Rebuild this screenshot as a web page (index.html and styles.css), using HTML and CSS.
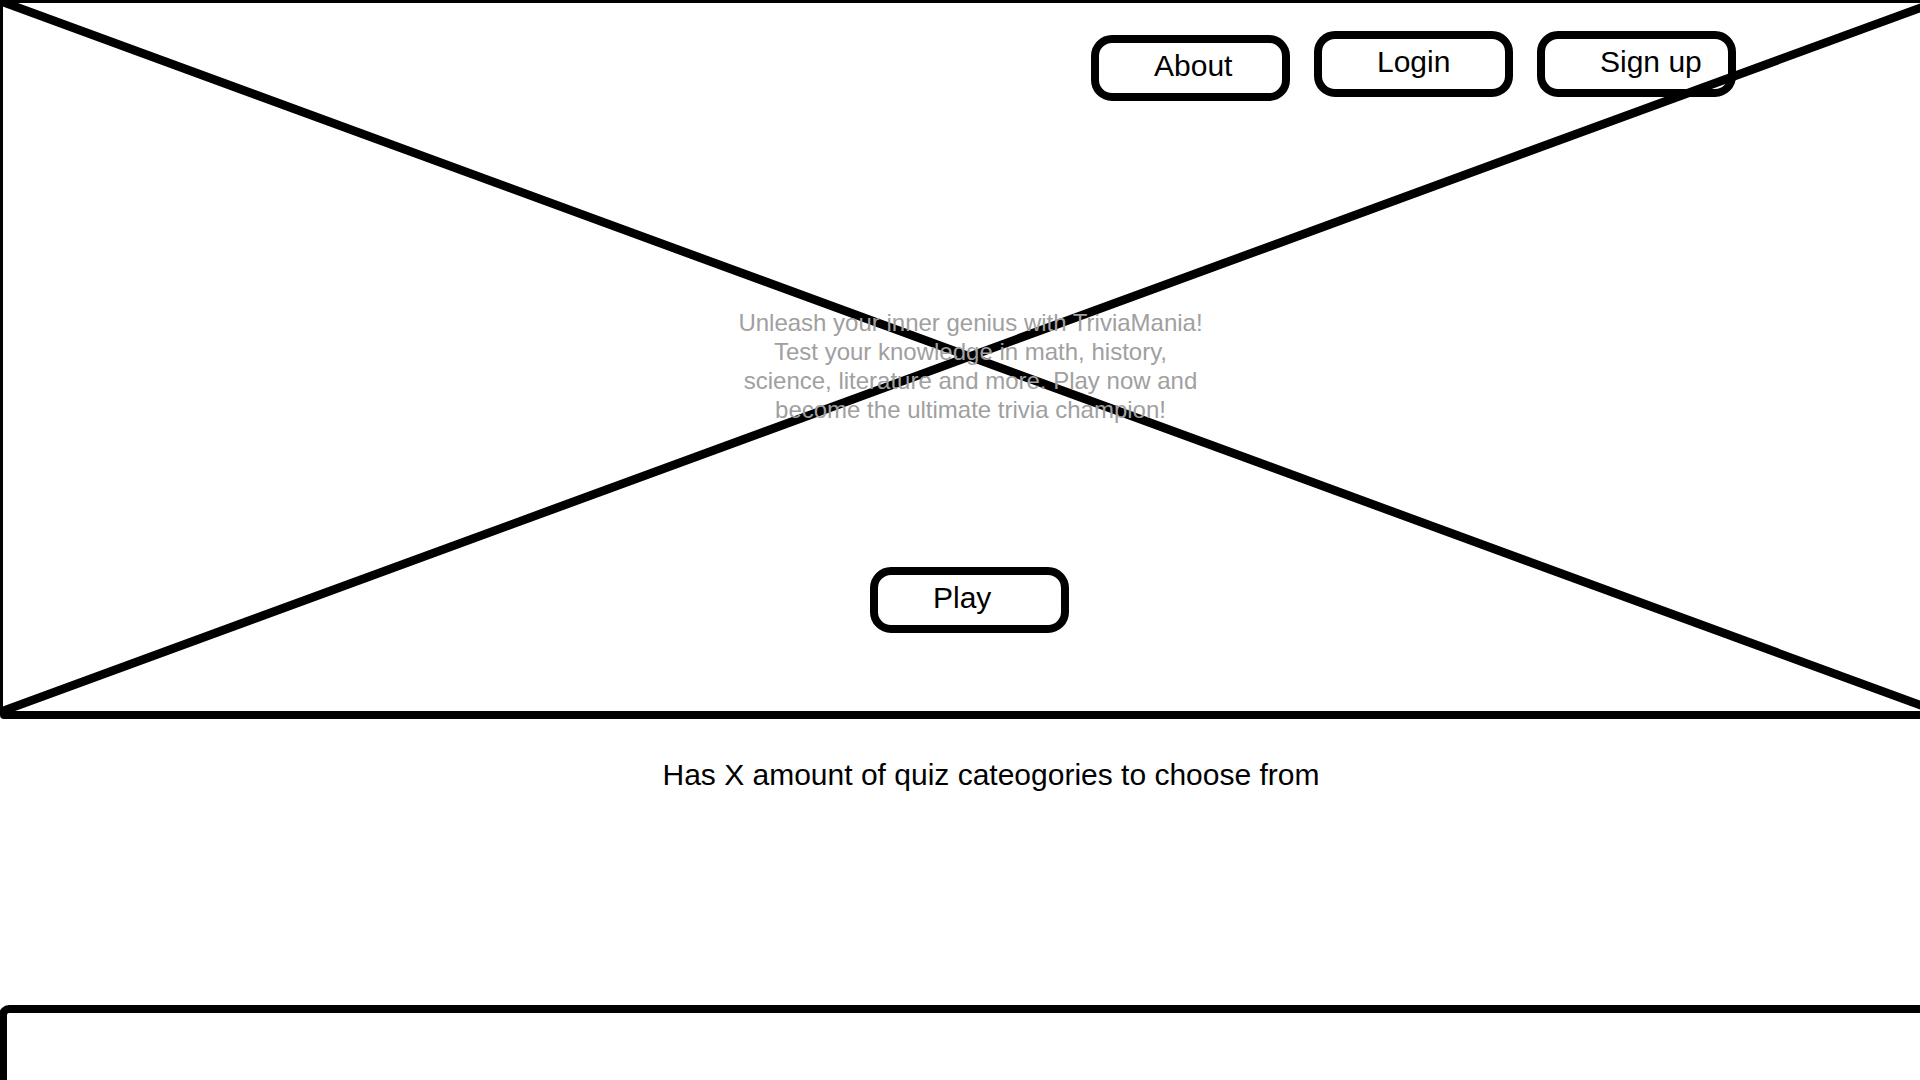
FILE: index.html
```html
<!DOCTYPE html>
<html lang="en">
<head>
<meta charset="utf-8">
<meta name="viewport" content="width=device-width, initial-scale=1">
<title>TriviaMania</title>
<link rel="stylesheet" href="styles.css">
</head>
<body>
<header class="hero">
  <svg class="hero-cross" viewBox="0 0 1939 711" preserveAspectRatio="none" aria-hidden="true">
    <path d="M0 1L1939 712M0 712L1939 1" fill="none" stroke="#000" stroke-width="8.6" vector-effect="non-scaling-stroke"/>
  </svg>
  <nav class="nav">
    <button class="button" type="button">About</button>
    <div class="account">
      <button class="button" type="button">Login</button>
      <button class="button" type="button">Sign up</button>
    </div>
  </nav>
  <p class="pitch">Unleash your inner genius with TriviaMania! Test your knowledge in math, history, science, literature and more. Play now and become the ultimate trivia champion!</p>
  <button class="button" type="button">Play</button>
</header>
<main>
  <p class="caption">Has X amount of quiz cateogories to choose from</p>
  <section class="panel" aria-label="Quiz categories"></section>
</main>
</body>
</html>
```
FILE: styles.css
```css
* {
  box-sizing: border-box;
}

body {
  margin: 0;
  overflow-x: hidden;
  background: #fff;
  color: #000;
  font-family: "Liberation Sans", Arial, sans-serif;
  font-size: 30px;
  line-height: 34px;
}

.hero {
  position: relative;
  display: flex;
  flex-direction: column;
  align-items: center;
  width: calc(100% + 19px);
  padding: 28px 0 78px;
  border: 3px solid #000;
  border-bottom-width: 8px;
  border-bottom-left-radius: 4px;
}

/* The cross runs from corner to corner, under the borders. */
.hero-cross {
  position: absolute;
  top: -3px;
  left: -3px;
  width: calc(100% + 6px);
  height: calc(100% + 3px);
  pointer-events: none;
}

.nav {
  display: flex;
  align-items: flex-end;
  align-self: flex-end;
  gap: 24px;
  margin-right: 200px;
}

.account {
  display: flex;
  gap: 24px;
  padding-bottom: 4px;
}

.button {
  width: 199px;
  padding: 6px 0 10px 55px;
  border: 8px solid #000;
  border-radius: 21px;
  background: transparent;
  color: inherit;
  font: inherit;
  text-align: left;
  cursor: pointer;
}

.pitch {
  position: relative;
  width: 482px;
  max-width: 100%;
  margin: 207px 0 143px;
  padding-left: 2px;
  color: #a0a0a0;
  font-size: 24px;
  line-height: 29px;
  text-align: center;
}

.caption {
  margin: 0;
  padding: 39px 0 213px 62px;
  text-align: center;
}

.panel {
  width: calc(100% + 19px);
  min-height: 400px;
  margin-left: -1px;
  border: 8px solid #000;
  border-radius: 10px;
}
```
